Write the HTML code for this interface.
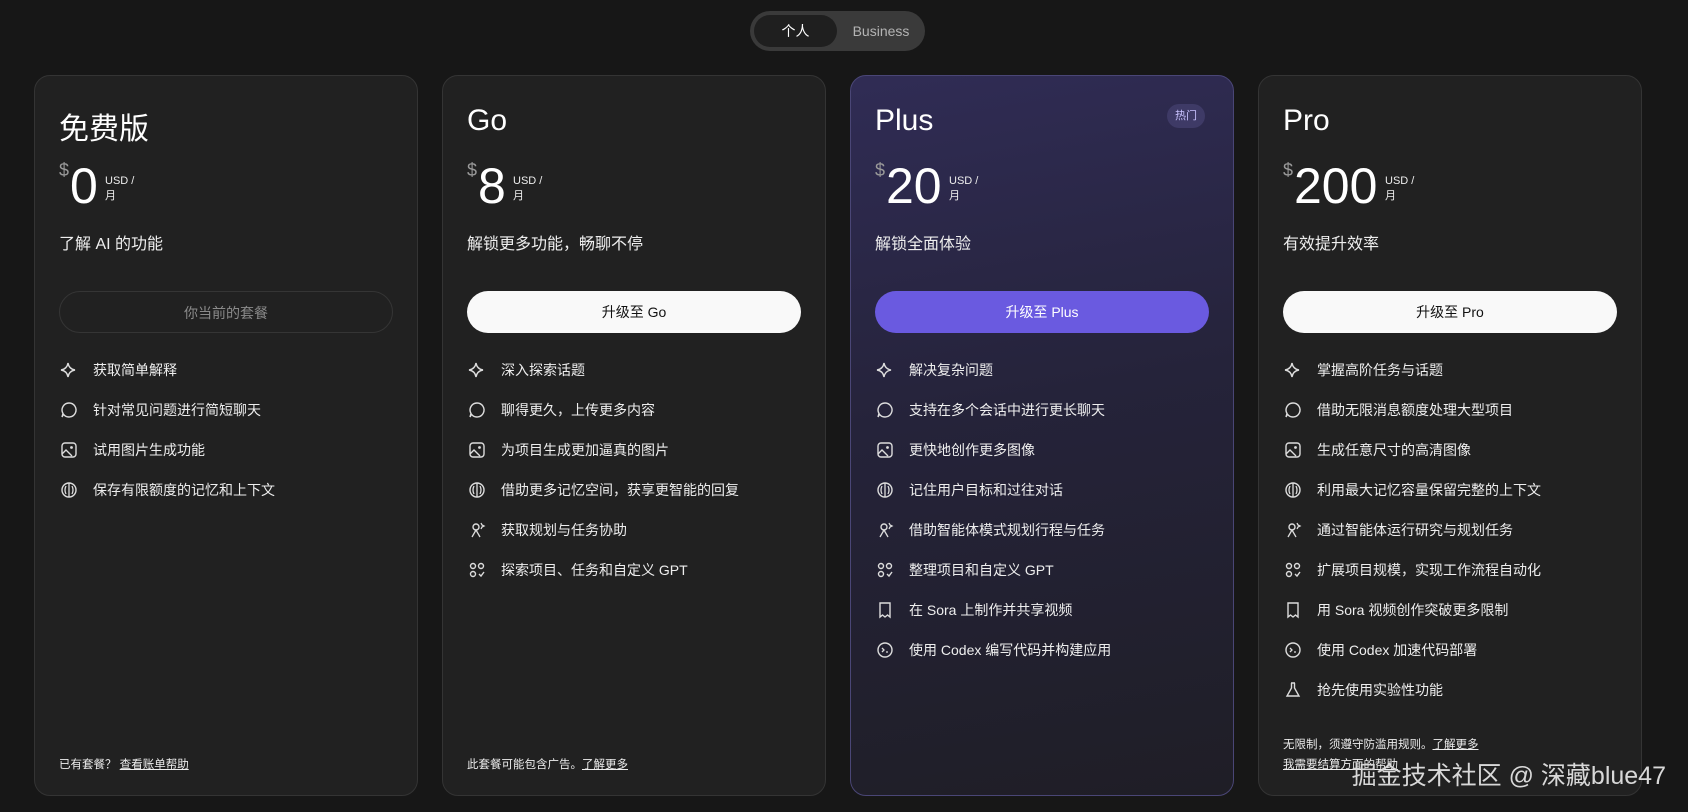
<!DOCTYPE html>
<html><head><meta charset="utf-8"><style>
*{box-sizing:border-box;margin:0;padding:0}
body{width:1688px;height:812px;background:#171717;font-family:"Liberation Sans","Noto Sans CJK SC",sans-serif;color:#ececec;position:relative;overflow:hidden}
.tog{position:absolute;left:750px;top:11px;width:175px;height:40px;border-radius:20px;background:#3a3a3a;}
.tog .a{position:absolute;left:4px;top:4px;width:83px;height:32px;border-radius:16px;background:#1f1f1f;color:#fff;font-size:14px;text-align:center;line-height:32px}
.tog .b{position:absolute;left:90px;top:4px;width:82px;height:32px;color:#b4b4b4;font-size:14px;text-align:center;line-height:32px}
.card{position:absolute;top:75px;width:384px;height:721px;border-radius:16px;background:#212121;border:1px solid #343434}
.card.plus{background:linear-gradient(170deg,#302c55 0%,#25233a 45%,#1f1e26 100%);border-color:#4a4676}
.t{position:absolute;left:24px;top:28px;font-size:30px;color:#fff}
.pr{position:absolute;left:24px;top:84px;height:60px}
.pr .d{position:absolute;left:0;top:0;font-size:18px;color:#9a9a9a}
.pr .n{position:absolute;left:11px;top:-4px;font-size:50px;color:#fff;line-height:60px}
.pr .u{position:absolute;top:14px;font-size:11px;line-height:15px;color:#eee;white-space:nowrap}
.sub{position:absolute;left:24px;top:154px;font-size:16px;color:#eee}
.btn{position:absolute;left:24px;top:215px;width:334px;height:42px;border-radius:21px;background:#f9f9f9;color:#111;font-size:14px;text-align:center;line-height:42px}
.btn.cur{background:transparent;border:1px solid #353535;color:#8a8a8a}
.btn.pp{background:#6a5ae0;color:#fff}
.badge{position:absolute;right:28px;top:28px;padding:0 8px;height:24px;border-radius:12px;background:#3e3a66;color:#c9c2ff;font-size:11px;line-height:24px}
ul{position:absolute;left:24px;top:274px;list-style:none}
li{height:40px;font-size:14px;color:#eee;display:flex;align-items:center;white-space:nowrap}
li svg{width:20px;height:20px;margin-right:14px;flex:none}
.ft{position:absolute;left:24px;bottom:20px;font-size:11.5px;color:#eee;line-height:20px}
.ft u{color:#eee}
.wm{position:absolute;right:22px;top:756px;font-size:25px;color:#d8d8d8}
</style></head><body>
<div class="tog"><div class="a">个人</div><div class="b">Business</div></div>

<svg width="0" height="0" style="position:absolute"><defs>
<symbol id="sp" viewBox="0 0 20 20"><path d="M9 3 Q10 9 16 10 Q10 11 9 17 Q8 11 2 10 Q8 9 9 3Z" fill="none" stroke="#ddd" stroke-width="1.4"/></symbol>
<symbol id="ch" viewBox="0 0 20 20"><path d="M10 3a7 7 0 1 1-5.5 11.3L3 17l1-3.5A7 7 0 0 1 10 3z" fill="none" stroke="#ddd" stroke-width="1.4"/></symbol>
<symbol id="im" viewBox="0 0 20 20"><rect x="3" y="3" width="14" height="14" rx="3" fill="none" stroke="#ddd" stroke-width="1.4"/><circle cx="12.5" cy="7.5" r="1.4" fill="#ddd"/><path d="M3 14l4-4 6 6" fill="none" stroke="#ddd" stroke-width="1.4"/></symbol>
<symbol id="br" viewBox="0 0 20 20"><circle cx="10" cy="10" r="7" fill="none" stroke="#ddd" stroke-width="1.4"/><path d="M10 3v14M7 6q-2 4 0 8M13 6q2 4 0 8" fill="none" stroke="#ddd" stroke-width="1.3"/></symbol>
<symbol id="ag" viewBox="0 0 20 20"><circle cx="9" cy="7" r="3" fill="none" stroke="#ddd" stroke-width="1.4"/><path d="M5 17l4-7 4 7M14 3l1 2 2 1-2 1-1 2" fill="none" stroke="#ddd" stroke-width="1.3"/></symbol>
<symbol id="gr" viewBox="0 0 20 20"><circle cx="6" cy="6" r="2.5" fill="none" stroke="#ddd" stroke-width="1.4"/><circle cx="14" cy="6" r="2.5" fill="none" stroke="#ddd" stroke-width="1.4"/><circle cx="6" cy="14" r="2.5" fill="none" stroke="#ddd" stroke-width="1.4"/><path d="M12 14l2 2 3-4" fill="none" stroke="#ddd" stroke-width="1.4"/></symbol>
<symbol id="so" viewBox="0 0 20 20"><path d="M5 3h10v14l-2.5-2-2.5 2-2.5-2L5 17z" fill="none" stroke="#ddd" stroke-width="1.4"/></symbol>
<symbol id="cd" viewBox="0 0 20 20"><circle cx="10" cy="10" r="7" fill="none" stroke="#ddd" stroke-width="1.4"/><path d="M7 8l2 2-2 2M11 12h2" fill="none" stroke="#ddd" stroke-width="1.3"/></symbol>
<symbol id="fl" viewBox="0 0 20 20"><path d="M8 3h4M8.5 3v5L4 16h12l-4.5-8V3" fill="none" stroke="#ddd" stroke-width="1.4"/></symbol>
</defs></svg>

<div class="card" style="left:34px">
<div class="t">免费版</div>
<div class="pr"><span class="d">$</span><span class="n">0</span><span class="u" style="left:46px">USD /<br>月</span></div>
<div class="sub">了解 AI 的功能</div>
<div class="btn cur">你当前的套餐</div>
<ul>
<li><svg><use href="#sp"/></svg>获取简单解释</li>
<li><svg><use href="#ch"/></svg>针对常见问题进行简短聊天</li>
<li><svg><use href="#im"/></svg>试用图片生成功能</li>
<li><svg><use href="#br"/></svg>保存有限额度的记忆和上下文</li>
</ul>
<div class="ft">已有套餐？ <u>查看账单帮助</u></div>
</div>

<div class="card" style="left:442px">
<div class="t">Go</div>
<div class="pr"><span class="d">$</span><span class="n">8</span><span class="u" style="left:46px">USD /<br>月</span></div>
<div class="sub">解锁更多功能，畅聊不停</div>
<div class="btn">升级至 Go</div>
<ul>
<li><svg><use href="#sp"/></svg>深入探索话题</li>
<li><svg><use href="#ch"/></svg>聊得更久，上传更多内容</li>
<li><svg><use href="#im"/></svg>为项目生成更加逼真的图片</li>
<li><svg><use href="#br"/></svg>借助更多记忆空间，获享更智能的回复</li>
<li><svg><use href="#ag"/></svg>获取规划与任务协助</li>
<li><svg><use href="#gr"/></svg>探索项目、任务和自定义 GPT</li>
</ul>
<div class="ft">此套餐可能包含广告。<u>了解更多</u></div>
</div>

<div class="card plus" style="left:850px">
<div class="t">Plus</div><div class="badge">热门</div>
<div class="pr"><span class="d">$</span><span class="n">20</span><span class="u" style="left:74px">USD /<br>月</span></div>
<div class="sub">解锁全面体验</div>
<div class="btn pp">升级至 Plus</div>
<ul>
<li><svg><use href="#sp"/></svg>解决复杂问题</li>
<li><svg><use href="#ch"/></svg>支持在多个会话中进行更长聊天</li>
<li><svg><use href="#im"/></svg>更快地创作更多图像</li>
<li><svg><use href="#br"/></svg>记住用户目标和过往对话</li>
<li><svg><use href="#ag"/></svg>借助智能体模式规划行程与任务</li>
<li><svg><use href="#gr"/></svg>整理项目和自定义 GPT</li>
<li><svg><use href="#so"/></svg>在 Sora 上制作并共享视频</li>
<li><svg><use href="#cd"/></svg>使用 Codex 编写代码并构建应用</li>
</ul>
</div>

<div class="card" style="left:1258px">
<div class="t">Pro</div>
<div class="pr"><span class="d">$</span><span class="n">200</span><span class="u" style="left:102px">USD /<br>月</span></div>
<div class="sub">有效提升效率</div>
<div class="btn">升级至 Pro</div>
<ul>
<li><svg><use href="#sp"/></svg>掌握高阶任务与话题</li>
<li><svg><use href="#ch"/></svg>借助无限消息额度处理大型项目</li>
<li><svg><use href="#im"/></svg>生成任意尺寸的高清图像</li>
<li><svg><use href="#br"/></svg>利用最大记忆容量保留完整的上下文</li>
<li><svg><use href="#ag"/></svg>通过智能体运行研究与规划任务</li>
<li><svg><use href="#gr"/></svg>扩展项目规模，实现工作流程自动化</li>
<li><svg><use href="#so"/></svg>用 Sora 视频创作突破更多限制</li>
<li><svg><use href="#cd"/></svg>使用 Codex 加速代码部署</li>
<li><svg><use href="#fl"/></svg>抢先使用实验性功能</li>
</ul>
<div class="ft" style="bottom:20px">无限制，须遵守防滥用规则。<u>了解更多</u><br><u>我需要结算方面的帮助</u></div>
</div>
<div class="wm">掘金技术社区 @ 深藏blue47</div>
</body></html>
